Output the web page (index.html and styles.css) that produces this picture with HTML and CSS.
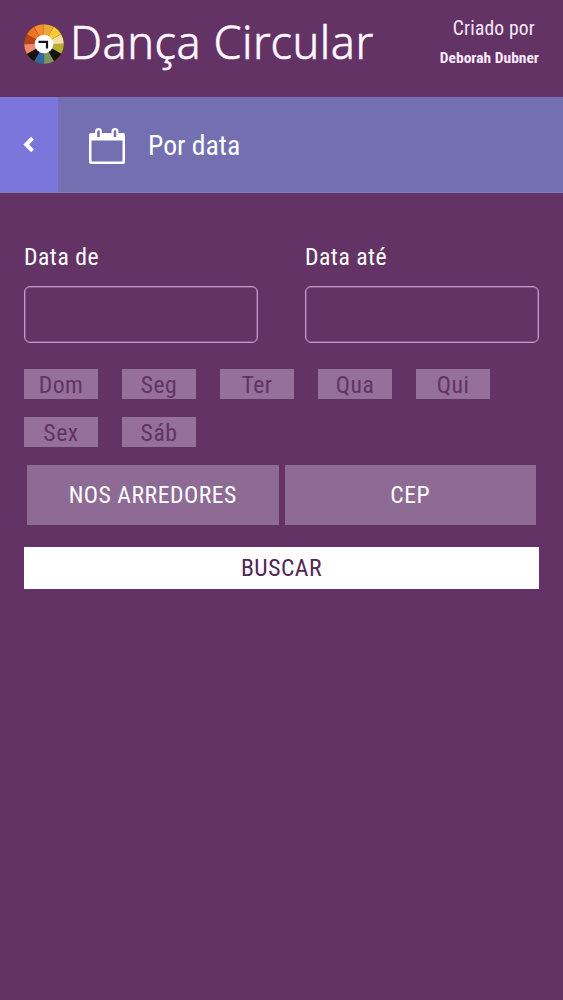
FILE: index.html
```html
<!DOCTYPE html>
<html lang="pt-BR">
<head>
<meta charset="utf-8">
<title>Dança Circular</title>
<link rel="stylesheet" href="styles.css">
</head>
<body>
<header class="header">
  <div class="brand">
    <svg class="logo" viewBox="0 0 42 42" width="42" height="42">
      <circle cx="21" cy="21" r="20.500" fill="#6b3a2c"/>
      <g fill="none" stroke-width="11" transform="rotate(-90 21 21)">
        <circle cx="21" cy="21" r="14.300" stroke="#e9a73c" pathLength="120" stroke-dasharray="9.800 110.200"/>
        <circle cx="21" cy="21" r="14.300" stroke="#f7cb35" pathLength="120" stroke-dasharray="9.800 110.200" stroke-dashoffset="-10"/>
        <circle cx="21" cy="21" r="14.300" stroke="#f6dfa0" pathLength="120" stroke-dasharray="9.800 110.200" stroke-dashoffset="-20"/>
        <circle cx="21" cy="21" r="14.300" stroke="#b5ad35" pathLength="120" stroke-dasharray="9.800 110.200" stroke-dashoffset="-30"/>
        <circle cx="21" cy="21" r="14.300" stroke="#16120f" pathLength="120" stroke-dasharray="9.800 110.200" stroke-dashoffset="-40"/>
        <circle cx="21" cy="21" r="14.300" stroke="#7b9660" pathLength="120" stroke-dasharray="9.800 110.200" stroke-dashoffset="-50"/>
        <circle cx="21" cy="21" r="14.300" stroke="#2f69a8" pathLength="120" stroke-dasharray="9.800 110.200" stroke-dashoffset="-60"/>
        <circle cx="21" cy="21" r="14.300" stroke="#16120f" pathLength="120" stroke-dasharray="9.800 110.200" stroke-dashoffset="-70"/>
        <circle cx="21" cy="21" r="14.300" stroke="#ef8a70" pathLength="120" stroke-dasharray="9.800 110.200" stroke-dashoffset="-80"/>
        <circle cx="21" cy="21" r="14.300" stroke="#b5431f" pathLength="120" stroke-dasharray="9.800 110.200" stroke-dashoffset="-90"/>
        <circle cx="21" cy="21" r="14.300" stroke="#f07325" pathLength="120" stroke-dasharray="9.800 110.200" stroke-dashoffset="-100"/>
        <circle cx="21" cy="21" r="14.300" stroke="#f58a2e" pathLength="120" stroke-dasharray="9.800 110.200" stroke-dashoffset="-110"/>
      </g>
      <circle cx="21" cy="21" r="9.300" fill="#fff"/>
      <path d="M15.500 18.800h8.500v6.700" fill="none" stroke="#17131a" stroke-width="2.200"/>
    </svg>
    <span class="brand-name">Dança Circular</span>
  </div>
  <div class="credit">
    <span class="credit-label">Criado por</span>
    <span class="credit-name">Deborah Dubner</span>
  </div>
</header>
<nav class="titlebar">
  <a class="back">
    <svg width="12" height="17" viewBox="0 0 12 17"><path d="M9.500 2.200L3.200 8.500l6.300 6.300" fill="none" stroke="#fff" stroke-width="4"/></svg>
  </a>
  <svg class="calendar" width="36" height="36" viewBox="0 0 36 36">
    <path fill="#fff" fill-rule="evenodd" d="M2 5H6V3.500a3.500 3.500 0 0 1 7 0V5H22.500V3.500a3.500 3.500 0 0 1 7 0V5H34a2 2 0 0 1 2 2V34a2 2 0 0 1-2 2H2a2 2 0 0 1-2-2V7a2 2 0 0 1 2-2ZM2.500 12.500V33.500H33.500V12.500ZM8.200 3.500V9h2.600V3.500a1.300 1.300 0 0 0-2.600 0ZM24.700 3.500V9h2.600V3.500a1.300 1.300 0 0 0-2.600 0Z"/>
  </svg>
  <span class="title">Por data</span>
</nav>
<main class="form">
  <div class="dates">
    <label class="field"><span class="field-label">Data de</span><input class="field-input" type="text"></label>
    <label class="field"><span class="field-label">Data até</span><input class="field-input" type="text"></label>
  </div>
  <div class="days">
    <span class="day">Dom</span><span class="day">Seg</span><span class="day">Ter</span><span class="day">Qua</span><span class="day">Qui</span>
    <span class="day">Sex</span><span class="day">Sáb</span>
  </div>
  <div class="places">
    <button class="place">NOS ARREDORES</button>
    <button class="place">CEP</button>
  </div>
  <button class="search">BUSCAR</button>
</main>
</body>
</html>
```
FILE: styles.css
```css
* { box-sizing: border-box; }
body {
  margin: 0;
  min-height: 1000px;
  background: #633366;
  color: #fff;
  font-family: "Roboto Condensed", Roboto, sans-serif;
  font-stretch: 75%;
  font-size: 23.700px;
  letter-spacing: 0.500px;
}
.header { display: flex; justify-content: space-between; height: 97px; padding: 0 24px 0 23px; }
.brand { display: flex; height: 88px; align-items: center; gap: 5px; }
.brand-name { margin-bottom: 4px; font-family: "Noto Sans", sans-serif; font-stretch: normal; font-size: 45px; font-weight: 300; letter-spacing: 0.550px; line-height: 60px; white-space: nowrap; color: #fff6ff; -webkit-text-stroke: 0.600px #fff6ff; }
.credit { display: flex; flex-direction: column; align-items: center; padding-top: 13px; color: #fbeafb; letter-spacing: 0; }
.credit-label { padding-left: 9px; font-size: 19.500px; letter-spacing: 0.200px; line-height: 31px; }
.credit-name { font-size: 15.500px; font-weight: 700; line-height: 28px; }
.titlebar { display: flex; align-items: center; height: 96px; background: #736fb1; border-bottom: 1px solid #817abc; }
.back { display: flex; align-items: center; justify-content: center; width: 58px; height: 95px; background: #7b76dc; }
.calendar { margin: 2px 0 0 31px; }
.title { margin: 2px 0 0 23px; font-size: 27.700px; letter-spacing: 0; line-height: 40px; }
.form { padding: 49px 24px 0; }
.dates { display: grid; grid-template-columns: 1fr 1fr; gap: 47px; }
.field { display: flex; flex-direction: column; gap: 14px; }
.field-label { line-height: 30px; }
.field-input { width: 100%; height: 57px; border: 1px solid #c797cb; border-radius: 6px; background: transparent; box-shadow: inset 0 0 0 0.500px #a878ad; }
.days { display: grid; grid-template-columns: repeat(5, 74px); gap: 18px 24px; margin-top: 26px; }
.day { height: 30px; background: #94709a; color: #633366; line-height: 32px; text-align: center; }
.places { display: flex; gap: 6px; margin: 18px 3px 0; }
.place { flex: 1; height: 60px; border: 0; padding: 0; background: #8d6b94; color: #fff; font: inherit; letter-spacing: inherit; }
.search { display: block; width: 100%; height: 42px; margin-top: 22px; border: 0; padding: 0; background: #fff; color: #532558; font: inherit; letter-spacing: inherit; }
```
